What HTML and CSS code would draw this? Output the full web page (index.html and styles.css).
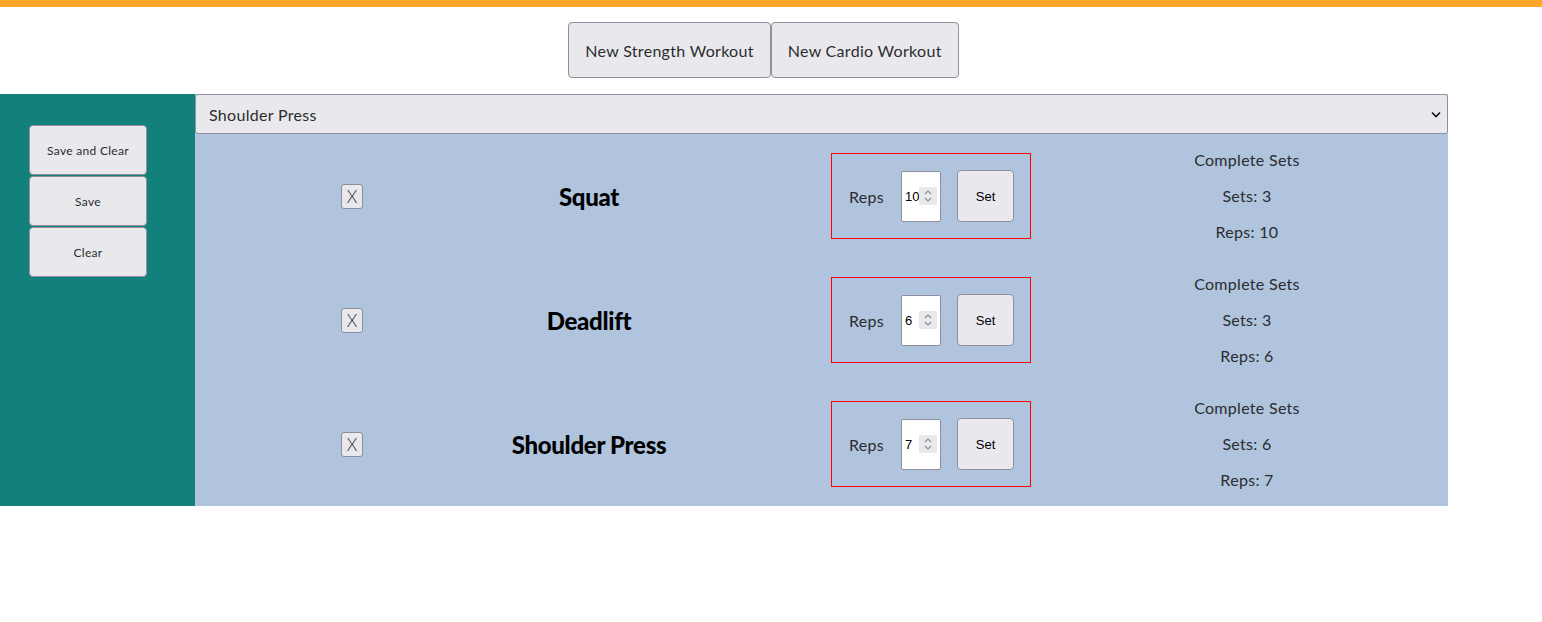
FILE: index.html
```html
<!DOCTYPE html>
<html lang="en">
<head>
<meta charset="utf-8">
<title>Workout</title>
<link rel="stylesheet" href="styles.css">
</head>
<body>
<div class="topbar"></div>
<div class="newbar">
  <button class="btn big">New Strength Workout</button>
  <button class="btn big">New Cardio Workout</button>
</div>
<main class="main">
  <aside class="sidebar">
    <button class="btn side">Save and Clear</button>
    <button class="btn side">Save</button>
    <button class="btn side">Clear</button>
  </aside>
  <section class="content">
    <div class="select">
      <span>Shoulder Press</span>
      <svg class="chev" width="10" height="7" viewBox="0 0 10 7"><path d="M1 1.5 L5 5.5 L9 1.5" fill="none" stroke="#111" stroke-width="1.6"/></svg>
    </div>
    <div class="row">
      <div class="cell"><button class="btn xbtn">X</button></div>
      <div class="cell name">Squat</div>
      <div class="cell">
        <div class="repsbox">
          <span class="label">Reps</span>
          <div class="num"><span>10</span><span class="spin"><svg width="18" height="18" viewBox="0 0 18 18"><path d="M6 7 L9 4 L12 7 M6 11 L9 14 L12 11" fill="none" stroke="#8a8a8e" stroke-width="1.1"/></svg></span></div>
          <button class="btn setbtn">Set</button>
        </div>
      </div>
      <div class="cell done">
        <div>Complete Sets</div>
        <div>Sets: 3</div>
        <div>Reps: 10</div>
      </div>
    </div>
    <div class="row">
      <div class="cell"><button class="btn xbtn">X</button></div>
      <div class="cell name">Deadlift</div>
      <div class="cell">
        <div class="repsbox">
          <span class="label">Reps</span>
          <div class="num"><span>6</span><span class="spin"><svg width="18" height="18" viewBox="0 0 18 18"><path d="M6 7 L9 4 L12 7 M6 11 L9 14 L12 11" fill="none" stroke="#8a8a8e" stroke-width="1.1"/></svg></span></div>
          <button class="btn setbtn">Set</button>
        </div>
      </div>
      <div class="cell done">
        <div>Complete Sets</div>
        <div>Sets: 3</div>
        <div>Reps: 6</div>
      </div>
    </div>
    <div class="row">
      <div class="cell"><button class="btn xbtn">X</button></div>
      <div class="cell name">Shoulder Press</div>
      <div class="cell">
        <div class="repsbox">
          <span class="label">Reps</span>
          <div class="num"><span>7</span><span class="spin"><svg width="18" height="18" viewBox="0 0 18 18"><path d="M6 7 L9 4 L12 7 M6 11 L9 14 L12 11" fill="none" stroke="#8a8a8e" stroke-width="1.1"/></svg></span></div>
          <button class="btn setbtn">Set</button>
        </div>
      </div>
      <div class="cell done">
        <div>Complete Sets</div>
        <div>Sets: 6</div>
        <div>Reps: 7</div>
      </div>
    </div>
  </section>
</main>
</body>
</html>
```
FILE: styles.css
```css
* { box-sizing: border-box; }
body {
  margin: 0;
  font-family: "Lato", "Noto Sans", sans-serif;
  color: #2c2c30;
  background: #fff;
  letter-spacing: 0.3px;
}
.topbar {
  height: 7px;
  background: #ffa62b;
}
.newbar {
  display: flex;
  justify-content: center;
  padding: 15px 15px 0 0;
  height: 87px;
}
.btn {
  font-family: "Lato", "Noto Sans", sans-serif;
  letter-spacing: 0.3px;
  background: #e9e9ed;
  border: 1px solid #8f8f9d;
  border-radius: 4px;
  color: #2c2c30;
  margin: 0;
  padding: 0;
}
.big {
  height: 56px;
  font-size: 16px;
  padding: 0 16px;
}
.main {
  display: flex;
  height: 412px;
}
.sidebar {
  width: 195px;
  background: #12807b;
  display: flex;
  flex-direction: column;
  gap: 1px;
  padding: 31px 0 0 29px;
}
.side {
  width: 118px;
  height: 50px;
  font-size: 12px;
}
.content {
  width: 1253px;
  background: #b0c4de;
}
.select {
  height: 40px;
  background: #e9e9ed;
  border: 1px solid #8f8f9d;
  border-radius: 3px;
  display: flex;
  align-items: center;
  justify-content: space-between;
  padding: 0 6px 0 13px;
  font-size: 16px;
}
.row {
  display: grid;
  grid-template-columns: 314px 160px 524px 108px;
  height: 124px;
  align-items: center;
  justify-items: center;
}
.cell { display: flex; justify-content: center; }
.xbtn {
  width: 22px;
  height: 25px;
  font-size: 17px;
  font-weight: 300;
  letter-spacing: 0;
  border-radius: 3px;
}
.name {
  font-size: 24px;
  font-weight: 900;
  color: #000;
  white-space: nowrap;
  letter-spacing: -0.3px;
}
.repsbox {
  width: 200px;
  height: 86px;
  border: 1px solid #ff0000;
  display: flex;
  align-items: center;
  padding-left: 17px;
}
.label {
  font-size: 16px;
  width: 52px;
}
.num {
  width: 40px;
  height: 51px;
  background: #fff;
  border: 1px solid #8f8f9d;
  border-radius: 2px;
  display: flex;
  align-items: center;
  padding-left: 3px;
  font-family: "Liberation Sans", sans-serif;
  letter-spacing: 0;
  font-size: 13px;
  color: #000;
  margin-right: 16px;
}
.num span:first-child { width: 14px; }
.spin {
  display: flex;
  background: #e9e9ed;
  width: 18px;
  height: 18px;
}
.setbtn {
  width: 57px;
  height: 52px;
  font-family: "Liberation Sans", sans-serif;
  letter-spacing: 0;
  font-size: 13px;
  color: #000;
}
.done {
  flex-direction: column;
  align-items: center;
  gap: 16px;
  font-size: 16px;
  line-height: 20px;
  white-space: nowrap;
}
```
